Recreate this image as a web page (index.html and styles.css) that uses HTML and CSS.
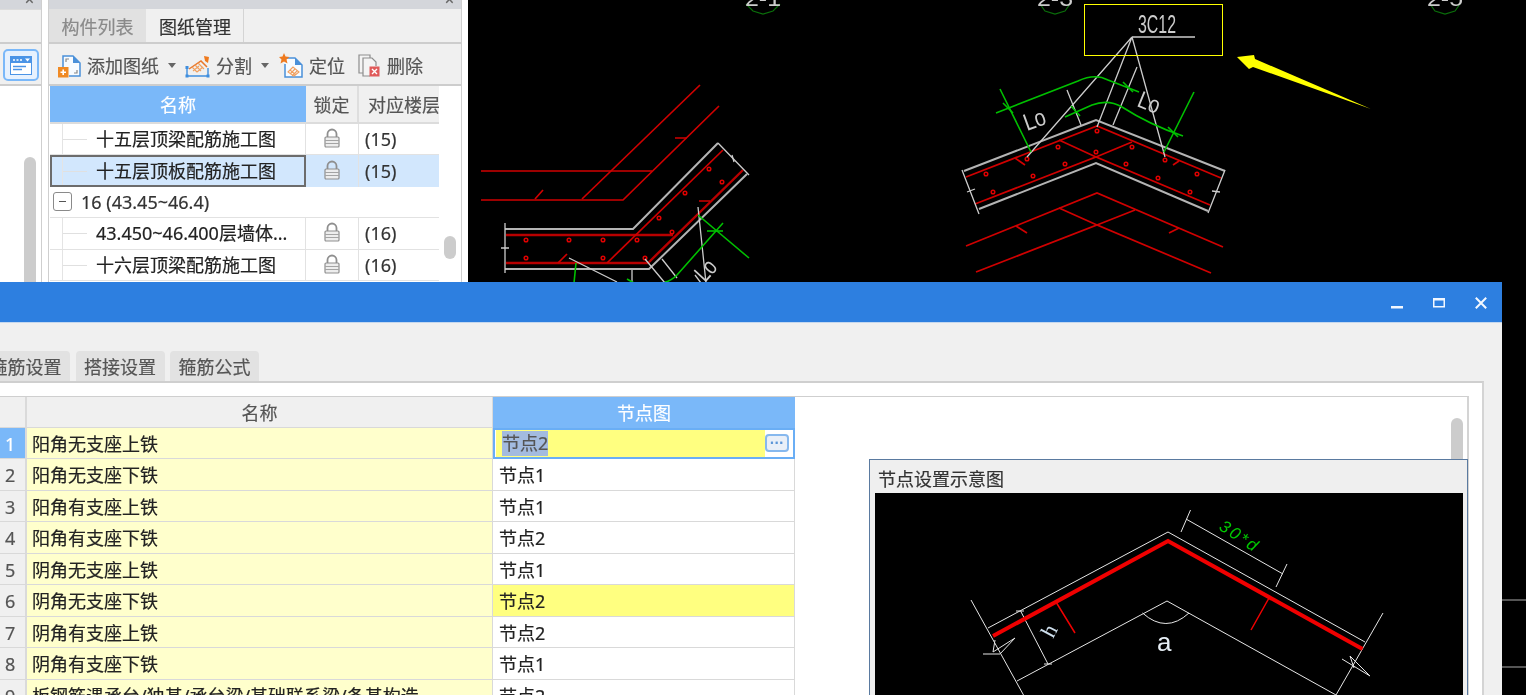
FILE: index.html
```html
<!DOCTYPE html>
<html lang="zh-CN">
<head>
<meta charset="utf-8">
<title>图纸管理</title>
<link rel="stylesheet" href="styles.css">
</head>
<body>
<svg class="defs" width="0" height="0" aria-hidden="true">
  <symbol id="lock" viewBox="0 0 16 20">
    <path class="lock-arc" d="M3.5 9V6a4.5 4.5 0 0 1 9 0v3"/>
    <rect class="lock-body" x="1" y="9" width="14" height="10" rx="1"/>
    <path class="lock-line" d="M1 12.5h14M1 15.5h14"/>
  </symbol>
</svg>
<div class="desktop">

  <svg class="cad" viewBox="468 0 1058 695" width="1058" height="695" aria-hidden="true">
    <!-- axis bubbles -->
    <g class="dg">
      <path d="M746 4l7 7 10 3 10-3 7-7"/>
      <path d="M1040 4l5 7 10 3 10-3 5-7"/>
      <path d="M1430 4l5 7 10 3 10-3 5-7"/>
    </g>
    <g class="axis">
      <text x="763" y="6" textLength="36" lengthAdjust="spacingAndGlyphs" text-anchor="middle">2-1</text>
      <text x="1055" y="6" textLength="36" lengthAdjust="spacingAndGlyphs" text-anchor="middle">2-3</text>
      <text x="1445" y="6" textLength="36" lengthAdjust="spacingAndGlyphs" text-anchor="middle">2-5</text>
    </g>

    <!-- left detail : red section -->
    <g class="r">
      <path d="M481 171H652"/>
      <path d="M582 199L700 85"/>
      <path d="M481 200H623L719 106"/>
      <path d="M535 199l8-9M675 138h12"/>
      <path class="r2" d="M506 235H673"/>
      <path class="r2" d="M506 263H648L743 170"/>
      <path d="M607 263L723 150"/>
      <path d="M558 263l9-9M699 201h11"/>
    </g>
    <g class="dots">
      <circle cx="526" cy="240" r="1.800"/><circle cx="569" cy="240" r="1.800"/><circle cx="603" cy="240" r="1.800"/><circle cx="637" cy="240" r="1.800"/>
      <circle cx="526" cy="258" r="1.800"/><circle cx="603" cy="258" r="1.800"/><circle cx="645" cy="258" r="1.800"/>
      <circle cx="672" cy="232" r="1.800"/><circle cx="659" cy="218" r="1.800"/><circle cx="685" cy="193" r="1.800"/><circle cx="709" cy="169" r="1.800"/><circle cx="722" cy="182" r="1.800"/>
    </g>
    <g class="w2">
      <path d="M505 229H633L718 143"/>
      <path d="M505 269H649L747 174"/>
    </g>
    <g class="w">
      <path d="M505 223V273M718 143L749 175"/>
      <path d="M501 248h8M732 155l2 7"/>
      <path d="M569 258L617 282M698 207L706 283M632 270V283"/>
      <path d="M662 259L677 278M645 259L665 283"/>
      <path d="M695 275l6 8"/>
      <text class="lo" transform="translate(705 283) rotate(-48)" x="0" y="0" textLength="20" lengthAdjust="spacingAndGlyphs">Lo</text>
    </g>
    <g class="g">
      <path d="M698 215L749 258"/>
      <path d="M723 223L677 275Q671 281 665 282"/>
      <path d="M707 231h16"/>
      <path d="M576 263L574 283M627 279l7 4"/>
    </g>

    <!-- right detail -->
    <g class="r">
      <path d="M966 177L1097 126L1221 178"/>
      <path d="M975 204L1096 157L1210 205"/>
      <path d="M1059 140L1096 157M1132 142L1096 157"/>
      <path d="M1015 158l10 7M1173 165l6-4"/>
      <path d="M966 246L1097 193L1223 247"/>
      <path d="M976 272L1097 225L1211 273"/>
      <path d="M1059 208L1097 225M1135 210L1097 225"/>
      <path d="M1016 226l11 7M1179 228l-10 5"/>
    </g>
    <g class="dots">
      <circle cx="986" cy="174" r="1.800"/><circle cx="1033" cy="176" r="1.800"/><circle cx="993" cy="192" r="1.800"/>
      <circle cx="1058" cy="147" r="1.800"/><circle cx="1065" cy="164" r="1.800"/><circle cx="1096" cy="152" r="1.800"/>
      <circle cx="1126" cy="164" r="1.800"/><circle cx="1132" cy="147" r="1.800"/><circle cx="1158" cy="178" r="1.800"/>
      <circle cx="1190" cy="192" r="1.800"/><circle cx="1197" cy="174" r="1.800"/><circle cx="1027" cy="159" r="1.800"/>
      <circle cx="1165" cy="160" r="1.800"/><circle cx="1097" cy="131" r="1.800"/>
    </g>
    <g class="w2">
      <path d="M964 171L1091 122L1096 120L1225 171"/>
      <path d="M979 209L1096 163L1208 211"/>
    </g>
    <g class="w">
      <path d="M962 170L979 214M1225 170L1208 213"/>
      <path d="M967 192l8-3M1212 191l8 1"/>
      <path d="M1132 37H1195"/>
      <path d="M1132 37L1027 157M1132 37L1097 127M1132 37L1165 157"/>
      <path d="M1137 67L1113 125M1067 90L1081 125"/>
      <text class="lo" transform="translate(1027 131) rotate(-20)" x="0" y="0" textLength="22" lengthAdjust="spacingAndGlyphs">Lo</text>
      <text class="lo" transform="translate(1136 106) rotate(22)" x="0" y="0" textLength="22" lengthAdjust="spacingAndGlyphs">Lo</text>
      <text class="note" x="1138" y="33" textLength="38" lengthAdjust="spacingAndGlyphs">3C12</text>
    </g>
    <g class="g">
      <path d="M996 113L1078 81Q1095 73 1108 80L1139 92"/>
      <path d="M1065 117L1092 105Q1108 99 1122 107Q1150 125 1183 136"/>
      <path d="M1000 89L1031 152M1194 92L1164 152"/>
      <path d="M1003 103l10 10M1123 82l10 10M1071 106l9 10M1168 127l10 10"/>
    </g>
    <rect class="note-box" x="1084.5" y="4.5" width="138" height="51"/>
    <polygon class="arrow" points="1237,57 1254,55 1255,59 1371,109 1253,67 1249,69"/>

    <!-- edge of the window behind the dialog -->
    <path class="behind" d="M1502 600H1526M1502 667H1526"/>
  </svg>

  <div class="dock">
    <aside class="panel side-panel">
      <div class="strip"><span class="strip-close">×</span></div>
      <div class="side-tabs"></div>
      <div class="side-tools">
        <button class="view-btn" type="button" aria-label="视图">
          <svg width="22" height="19" viewBox="0 0 22 19">
            <rect class="vb-frame" x="0.5" y="0.5" width="21" height="18"/>
            <rect class="vb-head" x="1" y="1" width="20" height="6"/>
            <path class="vb-dots" d="M3 4h2M6.500 4h2M10 4h2"/>
            <path class="vb-tri" d="M15 2.500h5l-2.500 3z"/>
            <path class="vb-lines" d="M3 10.500h13M3 13.500h9"/>
          </svg>
        </button>
      </div>
      <div class="side-body"><span class="side-thumb"></span></div>
    </aside>

    <section class="panel draw-panel">
      <div class="strip"><span class="strip-close">×</span></div>
      <div class="tabs">
        <div class="tab">构件列表</div>
        <div class="tab is-active">图纸管理</div>
      </div>
      <div class="toolbar">
        <div class="tool">
          <svg width="24" height="24" viewBox="0 0 24 24">
            <path class="ic-doc" d="M6 13V2h10l7 7v13H12"/>
            <path class="ic-fold" d="M16 2v7h7z"/>
            <path class="ic-grey" d="M9 8V5h3M20 16v3h-3"/>
            <rect class="ic-orange" x="1" y="13" width="10.500" height="10.500"/>
            <path class="ic-plus" d="M3.500 18.200h5.500M6.200 15.500v5.500"/>
          </svg>
          <span>添加图纸</span>
          <i class="caret"></i>
        </div>
        <div class="tool tool-split">
          <svg width="25" height="24" viewBox="0 0 25 24">
            <path class="ic-orange-l" d="M4 15L16 7l6 6"/>
            <path class="ic-hatch" d="M7 13l5 5M10 11l6 6M13 9l6 6M8 17l6-5M12 18l6-5"/>
            <path class="ic-orange-f" d="M19 2l5 1-1 6-3-2z"/>
            <path class="ic-blue" d="M2 12v10h21V14"/>
            <path class="ic-blue-n" d="M0.500 20.500h3v3h-3zM21.500 20.500h3v3h-3zM0.500 12h3v3h-3z"/>
          </svg>
          <span>分割</span>
          <i class="caret"></i>
        </div>
        <div class="tool tool-locate">
          <svg width="24" height="25" viewBox="0 0 24 25">
            <path class="ic-doc" d="M7 5h9l7 7v12H6V11"/>
            <path class="ic-fold" d="M16 5v7h7z"/>
            <path class="ic-hatch" d="M9 19l5-5 6 5-5 4zM11 21l5-5M13 23l5-5M11 17l6 5"/>
            <path class="ic-orange-f" d="M5 0l1.500 3.500 4 .5-3 2.500 1 4L5 8.500 1.500 10.500l1-4L0 4l3.500-.5z"/>
          </svg>
          <span>定位</span>
        </div>
        <div class="tool tool-delete">
          <svg width="22" height="23" viewBox="0 0 22 23">
            <path class="ic-grey-w" d="M5 19H1V1h11v3"/>
            <path class="ic-grey-w" d="M12 22H5V4h9l4 4v4"/>
            <rect class="ic-red" x="11.500" y="12.500" width="10" height="10"/>
            <path class="ic-x" d="M14 15l5 5M19 15l-5 5"/>
          </svg>
          <span>删除</span>
        </div>
      </div>

      <div class="tree">
        <div class="tree-row tree-head">
          <div class="th th-name">名称</div>
          <div class="th">锁定</div>
          <div class="th">对应楼层</div>
        </div>
        <div class="tree-row">
          <div class="td td-name"><i class="branch"></i>十五层顶梁配筋施工图</div>
          <div class="td td-lock"><svg width="16" height="20"><use href="#lock"/></svg></div>
          <div class="td">(15)</div>
        </div>
        <div class="tree-row is-selected">
          <div class="td td-name"><i class="branch"></i>十五层顶板配筋施工图</div>
          <div class="td td-lock"><svg width="16" height="20"><use href="#lock"/></svg></div>
          <div class="td">(15)</div>
        </div>
        <div class="tree-group"><i class="minus"></i>16 (43.45~46.4)</div>
        <div class="tree-row">
          <div class="td td-name"><i class="branch"></i>43.450~46.400层墙体...</div>
          <div class="td td-lock"><svg width="16" height="20"><use href="#lock"/></svg></div>
          <div class="td">(16)</div>
        </div>
        <div class="tree-row">
          <div class="td td-name"><i class="branch"></i>十六层顶梁配筋施工图</div>
          <div class="td td-lock"><svg width="16" height="20"><use href="#lock"/></svg></div>
          <div class="td">(16)</div>
        </div>
        <span class="tree-thumb"></span>
      </div>
    </section>
  </div>

  <section class="dialog">
    <header class="titlebar">
      <svg class="win" width="12" height="12" viewBox="0 0 12 12"><rect x="0" y="9" width="12" height="2.500"/></svg>
      <svg class="win" width="12" height="12" viewBox="0 0 12 12"><path class="win-max" d="M.75 1.800h10.500v8H.75z"/><rect x="0" y="1" width="12" height="2.500"/></svg>
      <svg class="win" width="12" height="12" viewBox="0 0 12 12"><path class="win-x" d="M.8.800l10.400 10.400M11.200.800L.8 11.200"/></svg>
    </header>
    <div class="dialog-body">
      <nav class="dlg-tabs">
        <div class="dlg-tab">箍筋设置</div>
        <div class="dlg-tab">搭接设置</div>
        <div class="dlg-tab">箍筋公式</div>
      </nav>
      <div class="tab-page">
        <div class="frame">
          <div class="grid">
            <div class="g-row g-head">
              <div class="g-no"></div>
              <div class="g-name">名称</div>
              <div class="g-node is-current">节点图</div>
            </div>
            <div class="g-row">
              <div class="g-no is-current">1</div>
              <div class="g-name">阳角无支座上铁</div>
              <div class="g-node is-editing">
                <div class="edit-field"><span class="edit-sel">节点2</span></div>
                <div class="edit-side"><button class="edit-btn" type="button" aria-label="选择">···</button></div>
              </div>
            </div>
            <div class="g-row"><div class="g-no">2</div><div class="g-name">阳角无支座下铁</div><div class="g-node">节点1</div></div>
            <div class="g-row"><div class="g-no">3</div><div class="g-name">阳角有支座上铁</div><div class="g-node">节点1</div></div>
            <div class="g-row"><div class="g-no">4</div><div class="g-name">阳角有支座下铁</div><div class="g-node">节点2</div></div>
            <div class="g-row"><div class="g-no">5</div><div class="g-name">阴角无支座上铁</div><div class="g-node">节点1</div></div>
            <div class="g-row"><div class="g-no">6</div><div class="g-name">阴角无支座下铁</div><div class="g-node is-changed">节点2</div></div>
            <div class="g-row"><div class="g-no">7</div><div class="g-name">阴角有支座上铁</div><div class="g-node">节点2</div></div>
            <div class="g-row"><div class="g-no">8</div><div class="g-name">阴角有支座下铁</div><div class="g-node">节点1</div></div>
            <div class="g-row"><div class="g-no">9</div><div class="g-name">板钢筋遇承台/独基/承台梁/基础联系梁/条基构造</div><div class="g-node">节点2</div></div>
          </div>
          <div class="preview-col">
            <div class="preview">
              <div class="preview-title">节点设置示意图</div>
              <svg class="preview-img" viewBox="875 493 588 202" width="588" height="202" aria-hidden="true">
                <g class="pw">
                  <path d="M988 628L1168 532L1365 642"/>
                  <path d="M1017 681L1167 601L1336 695"/>
                  <path d="M971 600L1023.500 695M1383 613L1336 695"/>
                  <path d="M1186 519L1283 574M1190.500 510L1181 532M1287 564L1276 587"/>
                  <path d="M1020.600 611L1048 664"/>
                  <path d="M1016 611h8M1044 664h8"/>
                  <path d="M1142.500 613Q1166 634 1189 613"/>
                  <path d="M983 654H1000L1015 638L993 652L995 640"/>
                  <path d="M1342 659L1370 676L1350 656L1354 668"/>
                </g>
                <path class="pr-thick" d="M993 636L1168 541L1362.500 649"/>
                <path class="pr" d="M1056 602L1075 633M1269 598L1251 630"/>
                <text class="p-h" transform="translate(1053 639) rotate(-62)" x="0" y="0">h</text>
                <text class="p-a" x="1157" y="651">a</text>
                <text class="p-d" transform="translate(1218 529) rotate(33)" x="0" y="0" textLength="42" lengthAdjust="spacing">30*d</text>
              </svg>
            </div>
          </div>
          <span class="frame-thumb"></span>
        </div>
      </div>
    </div>
  </section>
</div>
</body>
</html>
```
FILE: styles.css
```css
* { box-sizing: border-box; }
html, body { margin: 0; padding: 0; height: 100%; background: #000; overflow: hidden; }
body { font-family: "Noto Sans", "Noto Sans CJK SC", sans-serif; font-size: 18px; color: #222; -webkit-text-stroke: 0.2px currentColor; }
.defs { position: absolute; }

.desktop { position: relative; width: 1526px; height: 695px; overflow: hidden; background: #000; filter: blur(0.45px); }

/* CAD */
.cad { position: absolute; left: 468px; top: 0; -webkit-text-stroke: 0; }
.cad path, .cad polygon, .cad rect { fill: none; }
.r path { stroke: #d00000; stroke-width: 1.7; }
.r .r2 { stroke-width: 2.4; stroke: #b80000; }
.w path { stroke: #ccc; stroke-width: 1.3; }
.w2 path { stroke: #b4b4b4; stroke-width: 2; }
.g path { stroke: #00c000; stroke-width: 1.6; }
.dg path { stroke: #0a6d0a; stroke-width: 1.2; }
.dots circle { fill: none; stroke: #e00000; stroke-width: 1.5; }
.axis text { fill: #ccc; font-family: "Liberation Sans", sans-serif; font-size: 22px; }
.w text { fill: #ccc; stroke: none; font-family: "Liberation Sans", sans-serif; }
.w .lo { font-size: 24px; }
.w .note { font-size: 25px; }
.cad .note-box { stroke: #ffff00; stroke-width: 1; }
.cad .arrow { fill: #ffff00; }
.cad .behind { stroke: #aaa; stroke-width: 1; }

/* docked panels */
.dock { position: absolute; left: 0; top: 0; width: 468px; height: 282px; display: flex; gap: 6px; background: #fff; }
.panel { flex: none; height: 282px; display: flex; flex-direction: column; background: #fff; overflow: hidden; }
.side-panel { width: 42px; border-right: 1px solid #cfcfcf; }
.draw-panel { width: 414px; border-left: 1px solid #cfcfcf; border-right: 1px solid #cfcfcf; }
.strip { flex: none; height: 9px; background: #d4d6db; position: relative; }
.strip-close { position: absolute; right: 7px; top: -8px; font: 16px/16px "Liberation Sans", sans-serif; color: #666; }
.side-tabs { flex: none; height: 35px; background: #f0f0f0; border-top: 1px solid #dcdcdc; border-bottom: 2px solid #cdcdcd; }
.side-tools { flex: none; height: 42px; background: #f0f0f0; border-bottom: 2px solid #cdcdcd; display: flex; align-items: center; padding: 2px 0 0 3px; }
.view-btn { width: 36px; height: 32px; padding: 0; display: flex; align-items: center; justify-content: center; border: 2px solid #7ab8f9; border-radius: 5px; background: #e6f1fe; }
.vb-frame { fill: #fff; stroke: #4b94e6; }
.vb-head { fill: #4b94e6; }
.vb-dots { stroke: #fff; stroke-width: 1.500; fill: none; }
.vb-tri { fill: #fff; }
.vb-lines { stroke: #4b94e6; stroke-width: 1.500; fill: none; }
.side-body { flex: 1; display: flex; justify-content: flex-end; padding: 71px 5px 0 0; }
.side-thumb { width: 12px; height: 130px; background: #ccc; border-radius: 6px 6px 0 0; }

/* drawing panel */
.tabs { flex: none; height: 35px; display: flex; background: #f0f0f0; border-bottom: 2px solid #cdcdcd; }
.tab { width: 97px; margin-right: 1px; padding-top: 3px; display: flex; align-items: center; justify-content: center; background: #e1e1e1; color: #8a8a8a; line-height: 24px; }
.tab.is-active { background: #f0f0f0; color: #333; border-right: 1px solid #d4d4d4; }
.toolbar { flex: none; height: 42px; display: flex; align-items: center; background: #f0f0f0; border-bottom: 2px solid #cdcdcd; padding: 3px 0 0 8px; color: #555; }
.tool { display: flex; align-items: center; height: 24px; line-height: 24px; }
.tool svg { flex: none; margin-right: 6px; }
.tool-split { margin-left: 9px; }
.tool-locate { margin-left: 10px; }
.tool-delete { margin-left: 13px; }
.tool-delete svg { margin-right: 7px; }
.caret { width: 0; height: 0; margin-left: 9px; border: 4px solid transparent; border-top: 5px solid #666; border-bottom: 0; }
.ic-doc { fill: #f7fbff; stroke: #4a90d9; stroke-width: 1.500; }
.ic-fold { fill: #4a90d9; }
.ic-grey { fill: none; stroke: #888; stroke-width: 1.200; }
.ic-orange { fill: #f08a24; }
.ic-plus { fill: none; stroke: #fff; stroke-width: 1.600; }
.ic-orange-l { fill: none; stroke: #e9772a; stroke-width: 1.500; }
.ic-hatch { fill: none; stroke: #f0a060; stroke-width: 1.100; }
.ic-orange-f { fill: #ef7a1e; }
.ic-blue { fill: none; stroke: #3f8ede; stroke-width: 1.400; }
.ic-blue-n { fill: #3f8ede; }
.ic-grey-w { fill: #f4f4f4; stroke: #8d8d8d; stroke-width: 1.200; }
.ic-red { fill: #e05a5a; }
.ic-x { fill: none; stroke: #fff; stroke-width: 1.400; }

.tree { flex: 1; position: relative; background: #fff; padding-left: 1px; }
.tree-row { display: grid; grid-template-columns: 256px 53px 80px; width: 389px; height: 31.4px; border-bottom: 1px solid #e2e2e2; }
.tree-head { height: 38px; border-bottom: 2px solid #dcdcdc; }
.th { display: flex; align-items: center; justify-content: center; padding-top: 2px; background: #f0f0f0; border-right: 2px solid #dedede; color: #555; overflow: hidden; white-space: nowrap; line-height: 24px; }
.th:last-child { border-right: 0; justify-content: flex-start; padding-left: 9px; }
.th-name { background: #7ab8f9; color: #fff; border-right: 0; }
.td { display: flex; align-items: center; padding-left: 6px; line-height: 24px; border-right: 1px solid #e2e2e2; white-space: nowrap; overflow: hidden; }
.td:last-child { border-right: 0; color: #333; }
.td-name { position: relative; padding-left: 46px; }
.td-lock { justify-content: center; padding: 0 0 2px 0; }
.lock-arc { fill: none; stroke: #8f8f8f; stroke-width: 1.800; }
.lock-body { fill: #ededed; stroke: #8f8f8f; stroke-width: 1.200; }
.lock-line { fill: none; stroke: #a4a4a4; stroke-width: 1; }
.branch { position: absolute; left: 12px; top: 0; bottom: 0; width: 25px; border-left: 1px solid #e4e4e4; }
.branch::after { content: ""; position: absolute; left: 0; right: 0; top: 50%; border-top: 1px solid #e0e0e0; }
.is-selected .td { background: #d2e7fd; border-bottom: 0; }
.is-selected { border-bottom: 0; }
.is-selected .td-name { border: 2px solid #6c6c6c; padding-left: 44px; }
.is-selected .branch { left: 10px; }
.tree-group { display: flex; align-items: center; width: 389px; height: 31.4px; border-bottom: 1px solid #e2e2e2; padding-left: 3px; line-height: 24px; color: #333; }
.minus { position: relative; flex: none; width: 19px; height: 19px; margin-right: 9px; border: 1px solid #8a8a8a; border-radius: 3px; background: #fff; }
.minus::after { content: ""; position: absolute; left: 5px; right: 5px; top: 8px; border-top: 1px solid #555; }
.tree-thumb { position: absolute; left: 395px; top: 150px; width: 12px; height: 23px; border-radius: 6px; background: #ccc; }

/* dialog */
.dialog { position: absolute; left: 0; top: 282px; width: 1502px; height: 413px; display: flex; flex-direction: column; background: #f0f0f0; overflow: hidden; }
.titlebar { flex: none; height: 40px; background: #2d7fe0; display: flex; justify-content: flex-end; gap: 30px; padding: 15px 15px 0 0; }
.win { fill: #f3f8ff; }
.win-max { fill: none; stroke: #f3f8ff; stroke-width: 1.500; }
.win-x { fill: none; stroke: #f3f8ff; stroke-width: 2; }
.dialog-body { flex: 1; min-height: 0; display: flex; flex-direction: column; padding-top: 28px; border-top: 1px solid #c5d8ef; }
.dlg-tabs { flex: none; height: 30px; display: flex; gap: 5.5px; margin-left: -19px; }
.dlg-tab { width: 89px; padding-top: 2px; display: flex; align-items: center; justify-content: center; background: #e2e2e2; border-radius: 4px 4px 0 0; color: #555; line-height: 24px; }
.tab-page { flex: 1; min-height: 0; margin-right: 18px; padding: 13px 13px 0 0; background: #fff; border-top: 2px solid #cfcfcf; border-right: 2px solid #d4d4d4; }
.frame { position: relative; height: 400px; display: flex; border-top: 1px solid #cfcfcf; border-right: 2px solid #d4d4d4; }
.grid { flex: none; width: 795px; }
.g-row { display: grid; grid-template-columns: 27px 466px 302px; height: 31.5px; line-height: 24px; }
.g-row > div { display: flex; align-items: center; padding-top: 2px; white-space: nowrap; overflow: hidden; border-bottom: 1px solid #d9d9d9; }
.g-head { height: 30.5px; }
.g-no { background: #f0f0f0; padding-left: 5px; border-right: 2px solid #dadada; color: #555; }
.g-no.is-current { background: #7ab8f9; color: #fff; }
.g-name { background: #ffffcc; padding-left: 5px; border-right: 1px solid #d9d9d9; color: #222; }
.g-node { background: #fff; padding-left: 6px; border-right: 1px solid #d9d9d9; color: #222; }
.g-head .g-name { background: #f0f0f0; justify-content: center; color: #555; padding-left: 0; }
.g-head .g-node.is-current { background: #7ab8f9; color: #fff; justify-content: center; padding-left: 0; border: 0; }
.g-node.is-changed { background: #ffff80; }
.g-row > .g-node.is-editing { padding: 0 1px; border: 2px solid #6aaef5; gap: 0; background: #fff; align-items: stretch; }
.edit-field { flex: 1; background: #ffff80; display: flex; align-items: center; padding-left: 6px; }
.edit-sel { background: #a3bbdf; color: #555; line-height: 25px; }
.edit-side { flex: none; width: 27px; display: flex; align-items: center; }
.edit-btn { width: 24px; height: 18px; padding: 0; border: 2px solid #86b8ee; border-radius: 4px; background: #e9eff8; color: #5c96d8; font: bold 14px/12px "Liberation Sans", sans-serif; }

.preview-col { flex: 1; min-width: 0; display: flex; padding: 62px 0 0 74px; margin-right: -1px; position: relative; z-index: 1; }
.preview { flex: 1; min-width: 0; background: #efefef; border: 1px solid #5a7aa0; display: flex; flex-direction: column; }
.preview-title { flex: none; height: 33px; padding: 7px 0 0 8px; line-height: 24px; color: #333; }
.preview-img { flex: none; margin-left: 5px; background: #000; display: block; -webkit-text-stroke: 0; }
.pw path { fill: none; stroke: #e6e6e6; stroke-width: 1; }
.pr-thick { fill: none; stroke: #f00000; stroke-width: 4; }
.pr { fill: none; stroke: #f00000; stroke-width: 1.500; }
.p-h { fill: #cfe0ee; font: 22px "Liberation Serif", serif; }
.p-a { fill: #e6eef5; font: 26px "Liberation Sans", sans-serif; }
.p-d { fill: #00c800; font: italic 17px "Liberation Sans", sans-serif; }
.frame-thumb { position: absolute; left: 1451px; top: 21px; width: 12px; height: 41px; border-radius: 6px 6px 0 0; background: #ccc; }
```
